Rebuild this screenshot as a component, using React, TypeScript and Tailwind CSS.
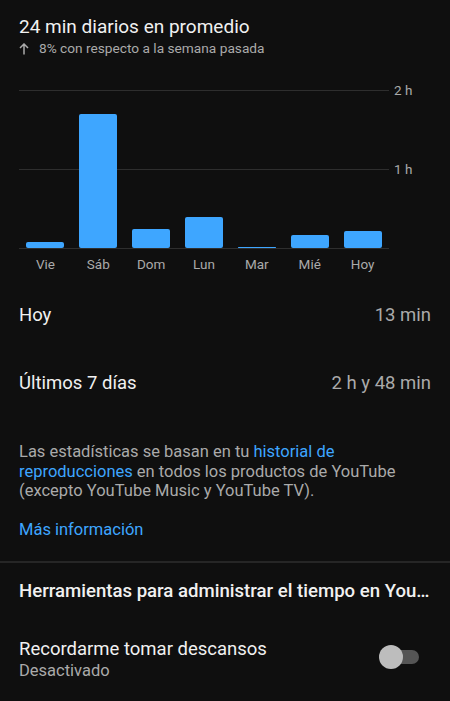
import * as React from "react"

const days = [
  { label: "Vie", h: 6 },
  { label: "Sáb", h: 134 },
  { label: "Dom", h: 19 },
  { label: "Lun", h: 31 },
  { label: "Mar", h: 1 },
  { label: "Mié", h: 13 },
  { label: "Hoy", h: 17 },
]

function UsageChart() {
  return (
    <div className="mt-[32px] w-[370px]">
      <div className="relative h-[159px]">
        {/* gridlines */}
        <div className="absolute left-0 right-0 top-0 h-px bg-[#2e2e2e]" />
        <div className="absolute left-0 right-0 top-[79px] h-px bg-[#2e2e2e]" />
        <div className="absolute left-0 right-0 bottom-0 h-px bg-[#2e2e2e]" />
        <span className="absolute left-[375px] top-[-9px] text-[13.5px] leading-[18px] text-[#aaaaaa] whitespace-nowrap">2 h</span>
        <span className="absolute left-[375px] top-[70px] text-[13.5px] leading-[18px] text-[#aaaaaa] whitespace-nowrap">1 h</span>

        <div className="relative grid grid-cols-7 h-full items-end pb-px">
          {days.map((d) => (
            <div key={d.label} className="flex justify-center">
              <div className="w-[38px] rounded-[2px] bg-[#3ea6ff]" style={{ height: d.h }} />
            </div>
          ))}
        </div>
      </div>
      <div className="grid grid-cols-7 mt-[6px]">
        {days.map((d) => (
          <span key={d.label} className="text-center text-[13.5px] leading-[18px] text-[#aaaaaa]">
            {d.label}
          </span>
        ))}
      </div>
    </div>
  )
}

function StatRow({ label, value }: { label: string; value: string }) {
  return (
    <div className="flex items-center justify-between h-[68px]">
      <span className="text-[18.5px] text-[#f1f1f1]">{label}</span>
      <span className="text-[18.5px] text-[#aaaaaa]">{value}</span>
    </div>
  )
}

export default function App() {
  return (
    <div
      className="w-[450px] h-[701px] overflow-hidden bg-[#0f0f0f]"
      style={{ fontFamily: "Roboto, 'Noto Sans', sans-serif" }}
    >
      <div className="px-[19px] pt-[15px]">
        <h1 className="text-[19px] leading-[24px] text-[#f1f1f1]">24 min diarios en promedio</h1>
        <div className="flex items-center gap-[10px] text-[13.7px] leading-[19px] text-[#aaaaaa]">
          <svg width="10" height="12" viewBox="0 0 10 12" fill="none" stroke="#aaaaaa" strokeWidth="1.5">
            <path d="M5 11.5V1M1 5l4-4 4 4" />
          </svg>
          <span>8% con respecto a la semana pasada</span>
        </div>

        <UsageChart />

        <div className="mt-[9px]">
          <StatRow label="Hoy" value="13 min" />
          <StatRow label="Últimos 7 días" value="2 h y 48 min" />
        </div>

        <p className="mt-[24px] text-[16.5px] leading-[19.5px] text-[#aaaaaa]">
          Las estadísticas se basan en tu <span className="text-[#3ea6ff]">historial de</span>
          <br />
          <span className="text-[#3ea6ff]">reproducciones</span> en todos los productos de YouTube
          <br />
          (excepto YouTube Music y YouTube TV).
        </p>
        <p className="mt-[19px] text-[16.5px] leading-[20px] text-[#3ea6ff]">Más información</p>
      </div>

      <div className="mt-[21px] h-[2px] bg-[#262626]" />

      <div className="px-[19px]">
        <h2 className="mt-[17px] whitespace-nowrap text-[18.6px] leading-[22px] font-medium text-[#f1f1f1]">
          Herramientas para administrar el tiempo en You…
        </h2>
        <div className="mt-[36px] flex items-center justify-between">
          <div>
            <div className="text-[18.5px] leading-[22px] text-[#f1f1f1]">Recordarme tomar descansos</div>
            <div className="text-[16.5px] leading-[22px] text-[#aaaaaa]">Desactivado</div>
          </div>
          <div className="relative mr-[12px] h-[14px] w-[34px] -translate-y-[3px]">
            <div className="absolute inset-0 rounded-full bg-[#555555]" />
            <div className="absolute left-[-6px] top-[-5px] h-[24px] w-[24px] rounded-full bg-[#bdbdbd]" />
          </div>
        </div>
      </div>
    </div>
  )
}
